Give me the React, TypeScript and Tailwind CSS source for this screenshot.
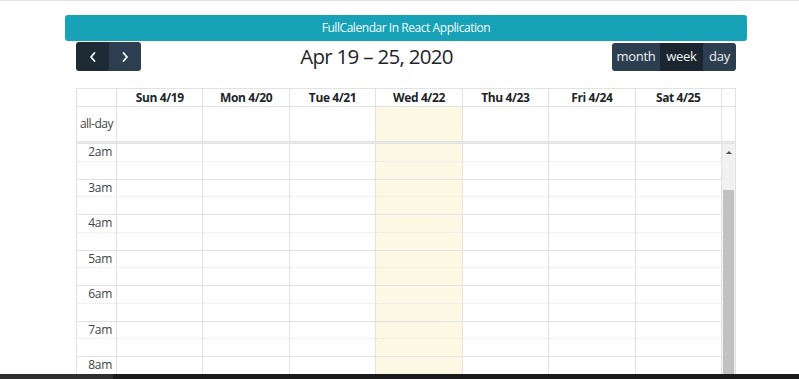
import React from "react";

const days = ["Sun 4/19", "Mon 4/20", "Tue 4/21", "Wed 4/22", "Thu 4/23", "Fri 4/24", "Sat 4/25"];
const hours = ["2am", "3am", "4am", "5am", "6am", "7am", "8am"];

function Chevron({ dir }: { dir: "left" | "right" }) {
  return (
    <svg width="10" height="12" viewBox="0 0 10 12" fill="none">
      {dir === "left" ? (
        <path d="M6.5 2 L3 6 L6.5 10" stroke="white" strokeWidth="1.8" strokeLinecap="round" strokeLinejoin="round" />
      ) : (
        <path d="M3.5 2 L7 6 L3.5 10" stroke="white" strokeWidth="1.8" strokeLinecap="round" strokeLinejoin="round" />
      )}
    </svg>
  );
}

export default function App() {
  return (
    <div className="relative flex h-[379px] w-[799px] flex-col overflow-hidden bg-white text-[#212529]" style={{ fontFamily: '"Open Sans", "Noto Sans", sans-serif' }}>
      <div className="h-px shrink-0 bg-[#e4e4e4]" />
      <div className="flex-1 overflow-hidden">
        <div className="ml-[65px] mt-[14px] w-[682px]">
          <div className="flex h-[26px] items-center justify-center rounded-[3px] bg-[#17a2b8] text-[12px] tracking-[-0.45px] text-[#f4fbfc]">
            FullCalendar In React Application
          </div>
          <div className="mx-[11px] mt-px flex h-[29px] items-center justify-between">
            <div className="flex h-[29px] overflow-hidden rounded-[3px]">
              <button className="flex w-[33px] items-center justify-center bg-[#1e2b37]">
                <Chevron dir="left" />
              </button>
              <button className="flex w-[32px] items-center justify-center bg-[#2c3e50]">
                <Chevron dir="right" />
              </button>
            </div>
            <div className="text-[20.5px] leading-none tracking-[-0.7px] text-[#212529]">Apr 19 – 25, 2020</div>
            <div className="flex h-[28px] overflow-hidden rounded-[3px] text-[13px] tracking-[-0.3px] text-[#f0f0f0]">
              <div className="flex w-[48px] items-center justify-center bg-[#2c3e50]">month</div>
              <div className="flex w-[43px] items-center justify-center bg-[#1a252f]">week</div>
              <div className="flex w-[33px] items-center justify-center bg-[#2c3e50]">day</div>
            </div>
          </div>
          <div className="mx-[11px] mt-[17px] border-l border-t border-[#e2e2e2]">
            {/* header */}
            <div className="flex h-[18px] border-b border-[#e2e2e2] text-[12px] font-bold tracking-[-0.4px]">
              <div className="w-[40px] shrink-0 border-r border-[#e2e2e2]" />
              {days.map((d) => (
                <div key={d} className="flex flex-1 items-center justify-center border-r border-[#e2e2e2]">
                  {d}
                </div>
              ))}
              <div className="w-[14px] shrink-0 border-r border-[#e2e2e2]" />
            </div>
            {/* all-day */}
            <div className="flex h-[34px] text-[12px]">
              <div className="flex w-[40px] shrink-0 items-center justify-end whitespace-nowrap border-r border-[#e2e2e2] pr-[3px] tracking-[-0.5px] text-[#444]">
                all-day
              </div>
              {days.map((d, i) => (
                <div key={d} className={`flex-1 border-r border-[#e2e2e2] ${i === 3 ? "bg-[#fcf8e3]" : ""}`} />
              ))}
              <div className="w-[14px] shrink-0 border-r border-[#e2e2e2]" />
            </div>
            <div className="h-[3px] border-y border-[#e2e2e2] bg-[#ececec]" />
            {/* body */}
            <div className="flex">
              <div className="relative flex flex-1">
                <div className="w-[40px] shrink-0 border-r border-[#e2e2e2]">
                  {hours.map((h) => (
                    <div key={h}>
                      <div className="flex h-[17.75px] items-center justify-end border-b border-dotted border-[#e6e6e6] pr-[4px] text-[12px] tracking-[-0.3px] text-[#444]">
                        {h}
                      </div>
                      <div className="h-[17.75px] border-b border-[#e2e2e2]" />
                    </div>
                  ))}
                </div>
                {days.map((d, i) => (
                  <div key={d} className={`flex-1 border-r border-[#e2e2e2] ${i === 3 ? "bg-[#fcf8e3]" : ""}`}>
                    {hours.map((h) => (
                      <div key={h}>
                        <div className="h-[17.75px] border-b border-dotted border-[#e6e6e6]" />
                        <div className="h-[17.75px] border-b border-[#e2e2e2]" />
                      </div>
                    ))}
                  </div>
                ))}
              </div>
              <div className="flex w-[14px] shrink-0 flex-col border-r border-[#e2e2e2] bg-[#f1f1f1]">
                <div className="flex h-[14px] items-center justify-center pt-[2px]">
                  <div className="h-0 w-0 border-x-[3px] border-b-[3px] border-x-transparent border-b-[#505050]" />
                </div>
                <div className="h-[32px]" />
                <div className="mx-[1px] h-[300px] bg-[#c1c1c1]" />
              </div>
            </div>
          </div>
        </div>
      </div>
      <div className="flex h-[5px] shrink-0">
        <div className="w-[113px] bg-[#2e2e2e]" />
        <div className="flex-1 bg-[#1b1b1b]" />
      </div>
    </div>
  );
}
